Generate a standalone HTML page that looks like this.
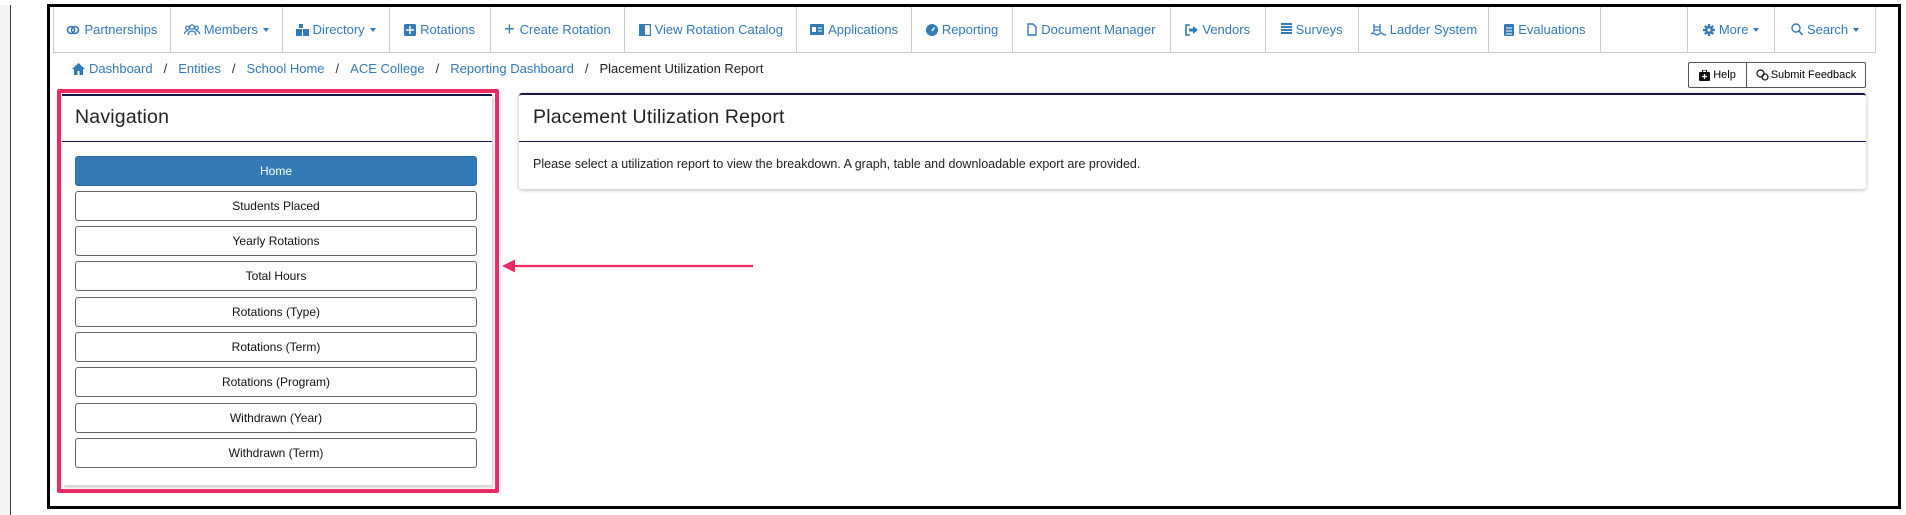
<!DOCTYPE html>
<html><head><meta charset="utf-8"><style>
*{box-sizing:border-box;margin:0;padding:0}
body{width:1906px;height:515px;background:#fff;font-family:"Liberation Sans",Arial,sans-serif;position:relative;overflow:hidden}
.lstrip{position:absolute;left:0;top:5px;width:11px;height:510px;background:#f4f4f4;border-right:1px solid #3a3a4a}
.frame{position:absolute;left:47px;top:4px;width:1854px;height:505px;border:3px solid #000}
.nav{position:absolute;left:53px;top:7px;width:1823px;height:46px;border:1px solid #ccc;border-top:none;display:flex}
.nav div{height:45px;border-right:1px solid #ccc;display:flex;align-items:center;justify-content:center;color:#337ab7;font-size:13px;white-space:nowrap}
.nav svg{margin-right:4px}
.car{display:inline-block;width:0;height:0;border-left:3px solid transparent;border-right:3px solid transparent;border-top:4px solid #337ab7;margin-left:5px;vertical-align:middle}
.bc{position:absolute;left:72px;top:61px;font-size:13px;color:#337ab7;display:flex;align-items:center}
.bc .s{color:#333;margin:0 11px}
.bc .c{color:#222}
.hb{position:absolute;left:1688px;top:62px;width:178px;height:26px;border:1px solid #555;border-radius:2px;display:flex;font-size:11px;color:#000}
.hb div{display:flex;align-items:center;justify-content:center;height:100%}
.pink{position:absolute;left:57px;top:89px;width:442px;height:404px;border:4px solid #ec2a63;border-radius:2px}
.np{position:absolute;left:62px;top:94px;width:430px;height:391px;border-top:2px solid #16164a;background:#fff;box-shadow:2px 3px 2px #d8d8d8}
.ttl{position:absolute;font-size:19.5px;color:#222;letter-spacing:.2px}
.hr{position:absolute;height:1px;background:#16164a}
.btn{position:absolute;left:75px;width:402px;height:30px;border:1px solid #666;border-radius:3px;font-size:12px;color:#111;display:flex;align-items:center;justify-content:center}
.rp{position:absolute;left:519px;top:93px;width:1347px;height:96px;border-top:2px solid #16164a;border-radius:3px;box-shadow:0 1px 4px #bbb;background:#fff}
</style></head><body>
<div class="lstrip"></div>
<div class="frame"></div>
<div class="nav">
<div style="width:117px"><svg width="14" height="12" viewBox="0 0 14 12"><circle cx="5" cy="6" r="3.5" fill="none" stroke="#337ab7" stroke-width="1.6"/><circle cx="9" cy="6" r="3.5" fill="none" stroke="#337ab7" stroke-width="1.6"/></svg>Partnerships</div>
<div style="width:112px"><svg width="16" height="12" viewBox="0 0 16 12"><circle cx="8" cy="3" r="2.2" fill="none" stroke="#337ab7" stroke-width="1.2"/><circle cx="3.5" cy="4" r="1.8" fill="none" stroke="#337ab7" stroke-width="1.2"/><circle cx="12.5" cy="4" r="1.8" fill="none" stroke="#337ab7" stroke-width="1.2"/><path d="M4 11a4 4 0 0 1 8 0M0.5 10a3 3 0 0 1 4-3M15.5 10a3 3 0 0 0-4-3" fill="none" stroke="#337ab7" stroke-width="1.2"/></svg>Members<span class="car"></span></div>
<div style="width:107px"><svg width="13" height="12" viewBox="0 0 13 12"><rect x="3" y="0" width="4" height="4" fill="#337ab7"/><rect x="0" y="5" width="6" height="7" fill="#337ab7"/><rect x="7" y="5" width="6" height="7" fill="#337ab7"/></svg>Directory<span class="car"></span></div>
<div style="width:101px"><svg width="12" height="12" viewBox="0 0 12 12"><rect width="12" height="12" rx="1.5" fill="#337ab7"/><path d="M6 2v8M2 6h8" stroke="#fff" stroke-width="1.5"/></svg>Rotations</div>
<div style="width:135px"><span style="font-size:18px;margin-right:5px">+</span>Create Rotation</div>
<div style="width:172px"><svg width="12" height="12" viewBox="0 0 12 12"><rect x="0.5" y="0.5" width="11" height="11" fill="none" stroke="#337ab7" stroke-width="1.3"/><rect x="0" y="0" width="6" height="12" fill="#337ab7"/></svg>View Rotation Catalog</div>
<div style="width:115px"><svg width="14" height="11" viewBox="0 0 14 11"><rect width="14" height="11" rx="1" fill="#337ab7"/><rect x="2" y="3" width="4" height="5" fill="#fff"/><path d="M8 4h4M8 7h4" stroke="#fff"/></svg>Applications</div>
<div style="width:101px"><svg width="12" height="12" viewBox="0 0 12 12"><circle cx="6" cy="6" r="6" fill="#337ab7"/><path d="M6 7L8.5 3.5" stroke="#fff" stroke-width="1.5"/></svg>Reporting</div>
<div style="width:158px"><svg width="10" height="13" viewBox="0 0 10 13"><path d="M1 1h5l3 3v8H1z" fill="none" stroke="#337ab7" stroke-width="1.4"/></svg>Document Manager</div>
<div style="width:95px"><svg width="13" height="12" viewBox="0 0 13 12"><path d="M5 1H1v10h4" fill="none" stroke="#337ab7" stroke-width="1.6"/><path d="M4 4.5h4V2l5 4-5 4V7.5H4z" fill="#337ab7"/></svg>Vendors</div>
<div style="width:93px"><svg width="11" height="13" viewBox="0 0 11 13"><path d="M0 1h11M0 4h11M0 7h11M0 10h11" stroke="#337ab7" stroke-width="2"/></svg>Surveys</div>
<div style="width:131px"><svg width="16" height="12" viewBox="0 0 16 12"><path d="M4 0v8M10 0v8M4 3h6M4 6h6M1 10q2-2 4 0t4 0 4 0 3 0" fill="none" stroke="#337ab7" stroke-width="1.3"/></svg>Ladder System</div>
<div style="width:112px"><svg width="10" height="13" viewBox="0 0 10 13"><rect y="1" width="10" height="12" rx="1.5" fill="#337ab7"/><path d="M2 5h6M2 8h6M2 11h6" stroke="#fff"/></svg>Evaluations</div>
<div style="width:87px"></div>
<div style="width:87px"><svg width="12" height="12" viewBox="0 0 12 12"><circle cx="6" cy="6" r="4" fill="#337ab7"/><path d="M6 0v12M0 6h12M1.8 1.8l8.4 8.4M10.2 1.8l-8.4 8.4" stroke="#337ab7" stroke-width="2.2"/><circle cx="6" cy="6" r="1.6" fill="#fff"/></svg>More<span class="car"></span></div>
<div style="width:100px;border-right:none"><svg width="12" height="13" viewBox="0 0 12 13"><circle cx="5" cy="5" r="4" fill="none" stroke="#337ab7" stroke-width="1.4"/><path d="M8 8l3.5 4" stroke="#337ab7" stroke-width="1.6"/></svg>Search<span class="car"></span></div>
</div>
<div class="bc"><svg width="13" height="12" viewBox="0 0 13 12" style="margin-right:4px"><path d="M6.5 0L0 6h2v6h3.5V8h2v4H11V6h2z" fill="#337ab7"/></svg>Dashboard<span class="s">/</span>Entities<span class="s">/</span>School Home<span class="s">/</span>ACE College<span class="s">/</span>Reporting Dashboard<span class="s">/</span><span class="c">Placement Utilization Report</span></div>
<div class="hb"><div style="width:58px;border-right:1px solid #555"><svg width="11" height="11" viewBox="0 0 11 11" style="margin-right:3px"><rect y="2" width="11" height="9" rx="1" fill="#111"/><rect x="3.5" y="0" width="4" height="3" fill="none" stroke="#111"/><path d="M5.5 4v5M3 6.5h5" stroke="#fff" stroke-width="1.3"/></svg>Help</div><div style="flex:1"><svg width="13" height="12" viewBox="0 0 13 12" style="margin-right:2px"><circle cx="4.5" cy="4.5" r="3.5" fill="none" stroke="#111" stroke-width="1.2"/><circle cx="9" cy="8" r="3" fill="none" stroke="#111" stroke-width="1.2"/></svg>Submit Feedback</div></div>
<div class="pink"></div>
<div class="np"></div>
<div class="ttl" style="left:75px;top:106px">Navigation</div>
<div class="hr" style="left:62px;top:141px;width:430px"></div>
<div class="btn" style="top:156px;background:#337ab7;border-color:#2e6da4;color:#fff">Home</div>
<div class="btn" style="top:191px">Students Placed</div>
<div class="btn" style="top:226px">Yearly Rotations</div>
<div class="btn" style="top:261px">Total Hours</div>
<div class="btn" style="top:297px">Rotations (Type)</div>
<div class="btn" style="top:332px">Rotations (Term)</div>
<div class="btn" style="top:367px">Rotations (Program)</div>
<div class="btn" style="top:403px">Withdrawn (Year)</div>
<div class="btn" style="top:438px">Withdrawn (Term)</div>
<div class="rp"></div>
<div class="ttl" style="left:533px;top:106px">Placement Utilization Report</div>
<div class="hr" style="left:519px;top:141px;width:1347px"></div>
<div style="position:absolute;left:533px;top:157px;font-size:12.5px;color:#222">Please select a utilization report to view the breakdown. A graph, table and downloadable export are provided.</div>
<svg style="position:absolute;left:500px;top:257px" width="256" height="18" viewBox="0 0 256 18"><path d="M10 9H253" stroke="#ec2a63" stroke-width="2.2"/><path d="M2 9L15 2.5V15.5z" fill="#ec2a63"/></svg>
</body></html>
